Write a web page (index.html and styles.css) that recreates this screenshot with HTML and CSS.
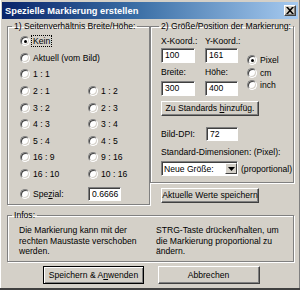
FILE: index.html
```html
<!DOCTYPE html>
<html lang="de">
<head>
  <meta charset="UTF-8">
  <title>Spezielle Markierung erstellen</title>
  <link rel="stylesheet" href="styles.css">
</head>
<body>
  <div class="window">
    <div class="titlebar">
      <span class="title">Spezielle Markierung erstellen</span>
      <span class="close">
        <svg width="8" height="7" viewBox="0 0 8 7">
          <path d="M0 0h2l2 2.2L6 0h2L5 3.5L8 7H6L4 4.8L2 7H0l3-3.5z" fill="#000"/>
        </svg>
      </span>
    </div>
    <div class="client">
      <div class="top">
        <fieldset class="group ratio">
          <legend>1) Seitenverhältnis Breite/Höhe:</legend>
          <div class="ratio-grid">
            <label class="radio wide"><span class="dot on"></span><span class="focus">Kein</span></label>
            <label class="radio wide"><span class="dot"></span><span>Aktuell (vom Bild)</span></label>
            <label class="radio wide"><span class="dot"></span><span>1 : 1</span></label>
            <label class="radio"><span class="dot"></span><span>2 : 1</span></label>
            <label class="radio"><span class="dot"></span><span>1 : 2</span></label>
            <label class="radio"><span class="dot"></span><span>3 : 2</span></label>
            <label class="radio"><span class="dot"></span><span>2 : 3</span></label>
            <label class="radio"><span class="dot"></span><span>4 : 3</span></label>
            <label class="radio"><span class="dot"></span><span>3 : 4</span></label>
            <label class="radio"><span class="dot"></span><span>5 : 4</span></label>
            <label class="radio"><span class="dot"></span><span>4 : 5</span></label>
            <label class="radio"><span class="dot"></span><span>16 : 9</span></label>
            <label class="radio"><span class="dot"></span><span>9 : 16</span></label>
            <label class="radio"><span class="dot"></span><span>16 : 10</span></label>
            <label class="radio"><span class="dot"></span><span>10 : 16</span></label>
          </div>
          <div class="spezial">
            <label class="radio"><span class="dot"></span><span>Spe<u>z</u>ial:</span></label>
            <span class="field w33">0.6666</span>
          </div>
        </fieldset>
        <div class="right-col">
          <fieldset class="group size">
            <legend>2) Größe/Position der Markierung:</legend>
            <div class="coords">
              <div class="coord-grid">
                <span class="lbl">X-Koord.:</span>
                <span class="lbl">Y-Koord.:</span>
                <span class="field w34 in-row">100</span>
                <span class="field w33 in-row">161</span>
                <span class="lbl gap-row">Breite:</span>
                <span class="lbl gap-row">Höhe:</span>
                <span class="field w34 in-row">300</span>
                <span class="field w33 in-row">400</span>
              </div>
              <div class="units">
                <label class="radio"><span class="dot on"></span><span>Pixel</span></label>
                <label class="radio"><span class="dot"></span><span>cm</span></label>
                <label class="radio"><span class="dot"></span><span>inch</span></label>
              </div>
            </div>
            <button class="btn add-std">Zu Standards <u>h</u>inzufüg.</button>
            <div class="dpi">
              <span class="lbl">Bild-DPI:</span>
              <span class="field w32">72</span>
            </div>
            <div class="lbl dims-lbl">Standard-Dimensionen: (Pixel):</div>
            <div class="dims">
              <span class="select">
                <span class="select-text">Neue Größe:</span>
                <span class="select-arrow">
                  <svg width="7" height="4" viewBox="0 0 7 4"><path d="M0 0h7L3.5 4z" fill="#000"/></svg>
                </span>
              </span>
              <span class="lbl">(proportional)</span>
            </div>
          </fieldset>
          <button class="btn save-values">Aktuelle Werte speichern</button>
        </div>
      </div>
      <fieldset class="group infos">
        <legend>Infos:</legend>
        <div class="info-cols">
          <p>Die Markierung kann mit der<br>rechten Maustaste verschoben<br>werden.</p>
          <p>STRG-Taste drücken/halten, um<br>die Markierung proportional zu<br>ändern.</p>
        </div>
      </fieldset>
      <div class="actions">
        <button class="btn default">Speichern &amp; A<u>n</u>wenden</button>
        <button class="btn">Abbrechen</button>
      </div>
    </div>
  </div>
</body>
</html>
```

FILE: styles.css
```css
html, body {
  margin: 0; padding: 0;
  width: 300px; height: 290px;
  overflow: hidden;
  background: #6e6660;
}
.window {
  width: 300px; height: 290px; box-sizing: border-box;
  background: #d4d0c8;
  padding-top: 2px;
  border-bottom: 2px solid #404040;
  box-shadow: inset 1px 0 #fff, inset -1px 0 #808080;
  font-family: "Liberation Sans", Arial, sans-serif;
  font-size: 8.6px; color: #000;
}
.titlebar {
  height: 17px; margin: 0 2px;
  background: linear-gradient(90deg, #0a246a 0%, #3a6ea5 45%, #a6caf0 100%);
  display: flex; align-items: center; justify-content: space-between;
  padding: 0 2px 0 3px;
}
.title { color: #fff; font-weight: bold; font-size: 9.3px; }
.close {
  width: 12px; height: 11px; box-sizing: border-box;
  background: #d4d0c8;
  border: 1px solid; border-color: #fff #404040 #404040 #fff;
  box-shadow: inset -1px -1px #808080;
  display: flex; align-items: center; justify-content: center;
}
.close svg { display: block; }

.client { padding: 2px 6px 0 7px; }
.top { display: flex; }

.group {
  margin: 0; padding: 0; min-width: 0;
  border: 1px solid #808080;
  box-shadow: inset 1px 1px #fff, 1px 1px #fff;
  box-sizing: border-box;
}
.group legend {
  margin-left: 4px; padding: 0 2px;
  line-height: 10px;
}

.ratio { width: 143px; height: 184px; }
.ratio-grid {
  display: grid; grid-template-columns: 68px 1fr;
  grid-auto-rows: 16.6px;
  padding: 2px 0 0 12px;
}
.radio { display: flex; align-items: center; white-space: nowrap; }
.wide { grid-column: 1 / 3; }
.dot {
  width: 10px; height: 10px; box-sizing: border-box; flex: none;
  margin-right: 3px;
  border-radius: 50%; background: #fff;
  border: 1px solid; border-color: #808080 #fff #fff #808080;
  box-shadow: inset 1px 1px #404040, inset -1px -1px #d4d0c8;
  display: flex; align-items: center; justify-content: center;
}
.dot.on::after {
  content: ""; width: 3px; height: 3px; border-radius: 50%; background: #000;
}
.focus { outline: 1px dotted #000; outline-offset: 0; padding: 0 1px; margin-left: -1px; }
.spezial {
  display: flex; align-items: center;
  margin-top: 5px; padding-left: 12px;
}
.spezial .radio { width: 68px; }

.field {
  height: 14px; box-sizing: border-box; background: #fff;
  border: 1px solid; border-color: #808080 #fff #fff #808080;
  box-shadow: inset 1px 1px #404040;
  padding: 0 3px; line-height: 12px; display: block;
}
.w32 { width: 32px; }
.w33 { width: 33px; }
.w34 { width: 34px; }

.right-col { width: 144px; display: flex; flex-direction: column; }
.size { height: 162px; padding: 0 0 0 10px; }
.size legend { margin-left: -2px; }
.lbl { line-height: 10px; white-space: nowrap; }
.coords { display: flex; padding-top: 5px; }
.coord-grid { display: grid; grid-template-columns: 44px 42px; }
.coord-grid .in-row { height: 15px; margin-top: 2px; line-height: 13px; }
.coord-grid .gap-row { margin-top: 4px; }
.coord-grid .field.in-row:nth-child(n+7) { margin-top: 4px; }
.units { display: flex; flex-direction: column; margin-top: 18px; }
.units .radio { height: 12.5px; }

.btn {
  font: inherit; color: #000; background: #d4d0c8;
  border: 1px solid; border-color: #fff #404040 #404040 #fff;
  box-shadow: inset -1px -1px #808080;
  padding: 0; margin: 0; display: block; text-align: center;
  box-sizing: border-box; white-space: nowrap;
}
.add-std { width: 98px; height: 15px; line-height: 13px; margin-top: 5px; }
.dpi { display: flex; align-items: center; margin-top: 11px; }
.dpi .lbl { width: 45px; }
.dims-lbl { margin-top: 6px; }
.dims { display: flex; align-items: center; gap: 3px; margin-top: 4px; }
.select {
  width: 77px; height: 15px; box-sizing: border-box; background: #fff;
  border: 1px solid; border-color: #808080 #fff #fff #808080;
  box-shadow: inset 1px 1px #404040;
  display: flex; align-items: stretch;
}
.select-text { flex: 1; padding: 2px 0 0 2px; line-height: 10px; }
.select-arrow {
  width: 12px; margin: 1px 0 1px 0; box-sizing: border-box;
  background: #d4d0c8;
  border: 1px solid; border-color: #fff #404040 #404040 #fff;
  display: flex; align-items: center; justify-content: center;
}
.save-values { width: 98px; height: 15px; line-height: 13px; margin: 5px 0 0 11px; }

.infos { margin-top: 5px; height: 52px; }
.info-cols { display: flex; padding: 5px 0 0 11px; }
.info-cols p { margin: 0; line-height: 10.5px; width: 140px; white-space: nowrap; }

.actions { display: flex; justify-content: center; gap: 14px; margin-top: 4px; padding-left: 1px; }
.actions .btn { width: 102px; height: 18px; line-height: 16px; }
.actions .default { width: 101px; outline: 1px solid #000; outline-offset: -1px; border-width: 2px 1px 1px 2px; line-height: 15px; }
```
